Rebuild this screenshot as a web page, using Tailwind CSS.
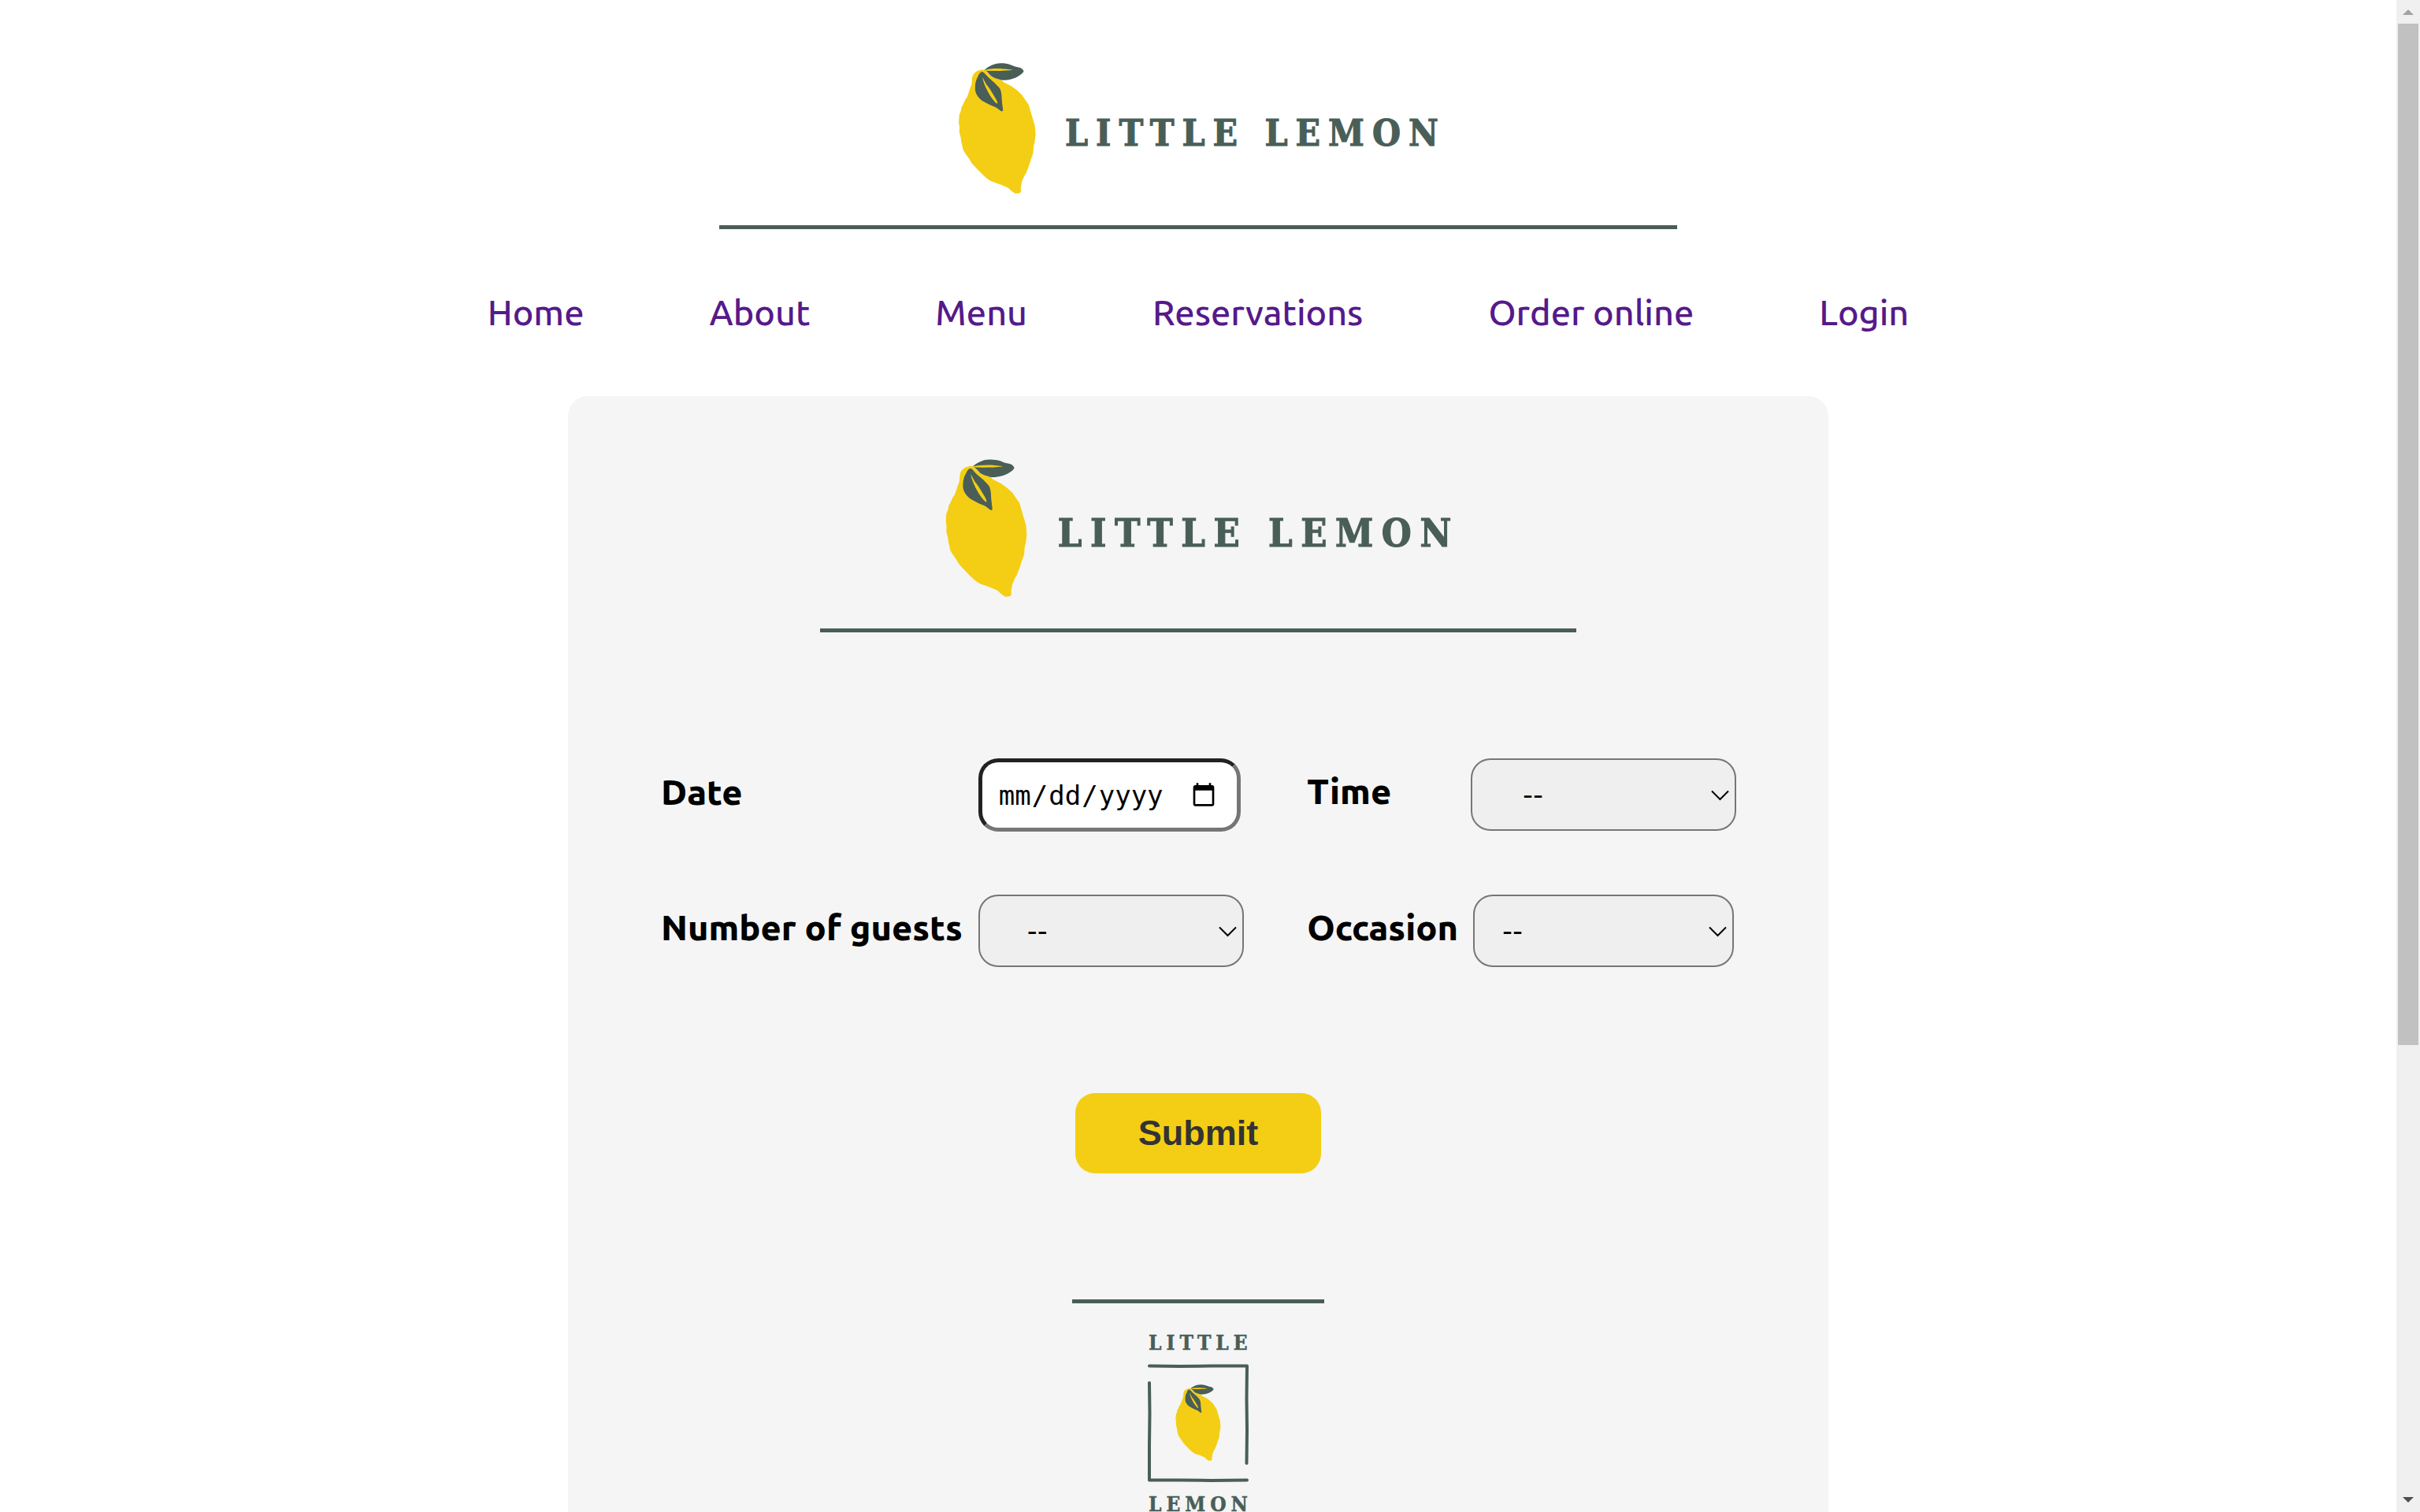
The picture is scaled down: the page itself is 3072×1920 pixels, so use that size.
<!DOCTYPE html>
<html lang="en">
<head>
<meta charset="utf-8">
<title>Little Lemon</title>
<script src="https://cdn.jsdelivr.net/npm/@tailwindcss/browser@4"></script>
</head>
<body class="flex h-screen overflow-hidden bg-white font-['Ubuntu','Noto_Sans',sans-serif] text-[45px] leading-[52px] text-black">

<svg class="hidden" aria-hidden="true">
  <symbol id="lemon" viewBox="64 68 310 526">
    <path fill="#f4ce14" d="M166 96C150 92 134 100 124 112C115 124 118 138 116 152L108 175L98 204L90 215L82 234L76 244L72 262L66 276L64 308L67 325L66 346L72 368L74 384L82 418L92 434L106 454L116 471L130 486L150 507C165 522 180 538 200 546L235 558L262 570L277 584L291 593L308 592C315 588 315 582 313 575L318 545L328 522L334 513L344 488L350 470L355 454L363 432L365 405L370 382L373 355L370 320L364 300L354 266L345 235L332 217L318 196L296 176L275 161L245 146L236 138L200 125Z"/>
    <path fill="#495e57" d="M166 97C178 84 196 77 210 72C230 67 252 69 272 75L290 82L308 86C320 90 326 98 325 103C318 113 306 121 290 128C272 135 252 138 236 137L210 129L197 123C188 114 180 105 172 99Z"/>
    <path fill="#f4ce14" d="M164 97C195 88 250 89 282 96C250 100 200 101 172 99Z"/>
    <path fill="#495e57" d="M160 104C168 108 174 118 184 127L208 148L228 169C238 186 236 206 238 226L242 260L236 263L214 247L190 237L158 220C144 208 135 198 131 183C128 164 130 140 141 123C146 110 152 102 160 104Z"/>
    <path fill="#f4ce14" d="M159 125C165 160 195 215 218 232C222 232 218 222 214 214C205 198 185 164 176 156Z"/>
  </symbol>
  <symbol id="wordmark" viewBox="0 0 608 166" overflow="visible">
    <use href="#lemon" width="98" height="166"/>
    <text x="135" y="105" fill="#495e57" stroke="#495e57" stroke-width="1" font-family="'DejaVu Serif Condensed','DejaVu Serif',serif" font-weight="700" font-size="46" letter-spacing="10">LITTLE LEMON</text>
  </symbol>
</svg>

<div class="min-w-0 grow">
  <header class="flex flex-col items-center pt-20">
    <svg class="h-[166px] w-[608px] overflow-visible" role="img" aria-label="Little Lemon"><use href="#wordmark"/></svg>
    <hr class="mt-10 w-2/5 border-t-[5px] border-[#495e57]">
    <nav class="mt-20 flex gap-[159px] font-medium text-[#551a8b]">
      <a href="#">Home</a>
      <a href="#">About</a>
      <a href="#">Menu</a>
      <a href="#">Reservations</a>
      <a href="#">Order online</a>
      <a href="#">Login</a>
    </nav>
  </header>

  <main class="mx-auto mt-20 flex w-full max-w-[1600px] flex-col items-center rounded-[25px] bg-[#f5f5f5] py-20">
    <svg class="h-[175px] w-[642px] overflow-visible" role="img" aria-label="Little Lemon"><use href="#wordmark"/></svg>
    <hr class="mt-10 w-3/5 border-t-[5px] border-[#495e57]">

    <form class="mt-40 flex w-full flex-col items-center">
      <div class="flex w-full justify-between pr-[117px] pl-[118px]">
        <div class="grid grid-cols-[auto_auto] items-center gap-x-5 gap-y-20 font-extrabold">
          <label for="date" class="pb-2">Date</label>
          <input id="date" type="date" class="h-[93px] w-[333px] rounded-[25px] border-[5px] border-t-[#222] border-r-[#767676] border-b-[#767676] border-l-[#222] bg-white pr-[23px] pl-[20px] font-['DejaVu_Sans_Mono',monospace] text-[34px] font-normal">
          <label for="guests" class="pb-2">Number of guests</label>
          <div class="relative">
            <select id="guests" class="block h-[92px] w-[337px] appearance-none rounded-[25px] border-2 border-[#767676] bg-[#efefef] pl-[60px] font-['DejaVu_Sans',sans-serif] text-[36px] font-normal"><option>--</option></select>
            <svg class="pointer-events-none absolute top-[40px] right-[9px] h-[14px] w-[23px]" viewBox="0 0 23 14" fill="none" stroke="#000" stroke-width="2"><path d="M1 1.500L11.500 12L22 1.500"/></svg>
          </div>
        </div>
        <div class="grid grid-cols-[auto_auto] items-center gap-x-4 gap-y-20 font-extrabold">
          <label for="time" class="pb-2">Time</label>
          <div class="relative">
            <select id="time" class="block h-[92px] w-[337px] appearance-none rounded-[25px] border-2 border-[#767676] bg-[#efefef] pl-[64px] font-['DejaVu_Sans',sans-serif] text-[36px] font-normal"><option>--</option></select>
            <svg class="pointer-events-none absolute top-[40px] right-[9px] h-[14px] w-[23px]" viewBox="0 0 23 14" fill="none" stroke="#000" stroke-width="2"><path d="M1 1.500L11.500 12L22 1.500"/></svg>
          </div>
          <label for="occasion" class="pb-2">Occasion</label>
          <div class="relative mx-auto">
            <select id="occasion" class="block h-[92px] w-[331px] appearance-none rounded-[25px] border-2 border-[#767676] bg-[#efefef] pl-[35px] font-['DejaVu_Sans',sans-serif] text-[36px] font-normal"><option>--</option></select>
            <svg class="pointer-events-none absolute top-[40px] right-[9px] h-[14px] w-[23px]" viewBox="0 0 23 14" fill="none" stroke="#000" stroke-width="2"><path d="M1 1.500L11.500 12L22 1.500"/></svg>
          </div>
        </div>
      </div>
      <button type="submit" class="mt-40 rounded-[25px] bg-[#f4ce14] px-20 py-[25px] font-['Liberation_Sans',sans-serif] text-[45px] font-bold text-[#333]">Submit</button>
    </form>

    <hr class="mt-40 w-1/5 border-t-[5px] border-[#495e57]">
    <svg class="mt-10 h-[225px] w-[128px] overflow-visible" viewBox="0 0 128 225" role="img" aria-label="Little Lemon">
      <g fill="#495e57" stroke="#495e57" stroke-width="0.500" font-family="'DejaVu Serif Condensed','DejaVu Serif',serif" font-weight="700" font-size="26" letter-spacing="6">
        <text x="1" y="19">LITTLE</text>
        <text x="1" y="224">LEMON</text>
      </g>
      <g fill="none" stroke="#495e57" stroke-width="4" stroke-linecap="round" stroke-linejoin="round">
        <path d="M2 39.500L40 40L80 39.500L126 39.500L125.500 80L126 120L125.500 163"/>
        <path d="M2 61L2.500 100L2 140L2 184.500L40 184.500L80 185L126 184.500"/>
      </g>
      <use href="#lemon" x="35" y="63" width="58" height="97"/>
    </svg>
  </main>
</div>

<div class="flex w-[30px] shrink-0 flex-col items-center bg-[#f0f0f0]" aria-hidden="true">
  <svg class="h-[30px] w-[30px]" viewBox="0 0 30 30" fill="#a3a3a3"><path d="M8 19L15 12L22 19Z"/></svg>
  <div class="h-[1297px] w-[26px] bg-[#c1c1c1]"></div>
  <svg class="mt-auto h-[30px] w-[30px]" viewBox="0 0 30 30" fill="#505050"><path d="M8 11L15 18L22 11Z"/></svg>
</div>
</body>
</html>
